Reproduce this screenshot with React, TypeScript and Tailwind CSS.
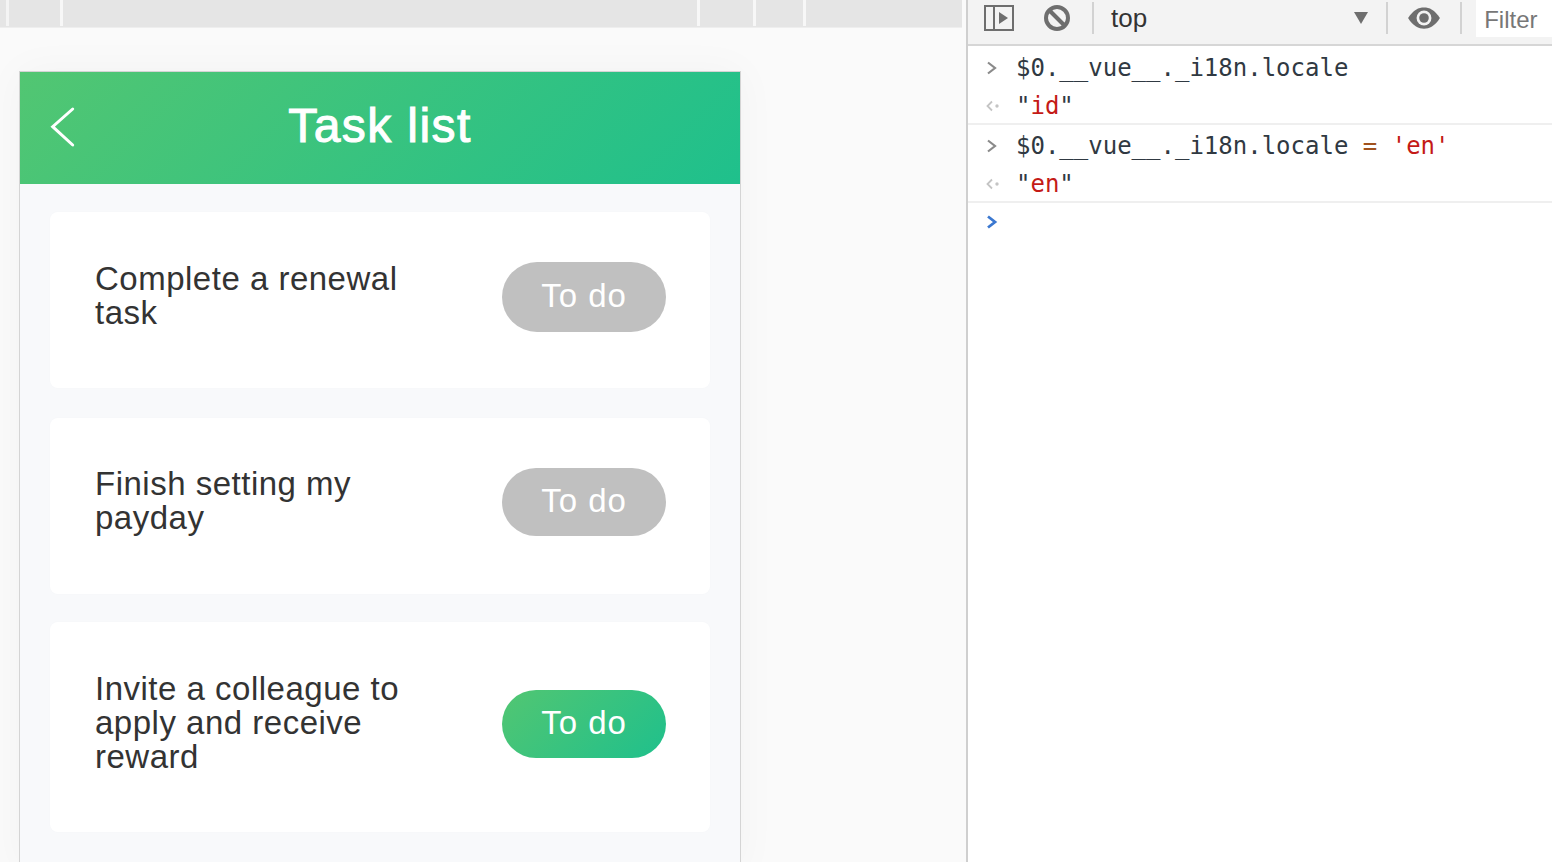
import React from 'react';

const tasks = [
  { id: 1, title: 'Complete a renewal task', h: 'h-[176px] pb-[6px] mb-[30px]', btn: 'h-[70px]', active: false },
  { id: 2, title: 'Finish setting my payday', h: 'h-[176px] pb-[8px] mb-[28px]', btn: 'h-[68px]', active: false },
  { id: 3, title: 'Invite a colleague to apply and receive reward', h: 'h-[210px] pb-[6px]', btn: 'h-[68px]', active: true },
];

const TaskCard = ({ title, h, btn, active }: { title: string; h: string; btn: string; active: boolean }) => (
  <div className={`${h} bg-white rounded-lg flex items-center justify-between pl-[45px] pr-[44px] shadow-[0_0_6px_rgba(0,0,0,0.012)]`}>
    <div className="w-[320px] text-[33px] tracking-[0.5px] leading-[34px] text-[#333] pb-[2px]">{title}</div>
    <div
      className={`w-[164px] ${btn} rounded-full flex items-center justify-center text-[33px] tracking-[1px] text-white pb-[2px] ${
        active ? 'bg-[linear-gradient(135deg,#52c672,#1fc08c)]' : 'bg-[#c0c0c0]'
      }`}
    >
      To do
    </div>
  </div>
);

const Prompt = ({ blue }: { blue?: boolean }) => (
  <svg width="12" height="14" viewBox="0 0 12 14" fill="none" stroke={blue ? '#3b78d0' : '#8a8a8a'} strokeWidth={blue ? 2.8 : 2.2}>
    <path d="M2 1.5 L9 7 L2 12.5" />
  </svg>
);

const ResultArrow = () => (
  <svg width="14" height="12" viewBox="0 0 14 12" fill="none" stroke="#c4c4c4" strokeWidth="1.8">
    <path d="M6 1.5 L1.5 6 L6 10.5" />
    <circle cx="11" cy="6" r="0.8" fill="#c4c4c4" />
  </svg>
);

const ConsoleRow = ({ kind, children, border }: { kind: 'in' | 'out'; children: React.ReactNode; border?: boolean }) => (
  <div className={`flex items-center pt-[2px] ${border ? 'border-b-2 border-[#efefef]' : ''}`}>
    <div className="w-[48px] pl-[18px] flex items-center">{kind === 'in' ? <Prompt /> : <ResultArrow />}</div>
    <div className="text-[24px] leading-none text-[#303942] whitespace-pre">{children}</div>
  </div>
);

const Sep = () => <div className="w-[2px] h-[32px] bg-[#d2d2d2]" />;

export default function App() {
  return (
    <div className="w-[1552px] h-[862px] overflow-hidden flex bg-white font-['Liberation_Sans',sans-serif]">
      {/* page side */}
      <div className="w-[962px] shrink-0 bg-[#fafafa] flex flex-col">
        <div className="h-[28px] shrink-0 bg-[#e5e5e5] border-b border-[#eeeeee] flex items-start">
          <div className="w-[9px] h-[26px] border-r-[3px] border-[#f4f4f4]" />
          <div className="w-[54px] h-[26px] border-r-[3px] border-[#f7f7f7]" />
          <div className="w-[637px] h-[26px] border-r-[3px] border-[#f7f7f7]" />
          <div className="w-[56px] h-[26px] border-r-[3px] border-[#f7f7f7]" />
          <div className="w-[50px] h-[26px] border-r-[3px] border-[#f7f7f7]" />
        </div>
        <div className="pl-[19px] pt-[43px]">
          <div className="w-[722px] h-[800px] bg-[#f8f9fb] border-x border-t border-[#d4d4d4] shadow-[0_0_40px_rgba(0,0,0,0.035)]">
            <div className="relative h-[112px] bg-[linear-gradient(135deg,#52c672,#1fc08c)] flex items-center justify-center">
              <svg className="absolute left-[30px] top-[34px]" width="28" height="42" viewBox="0 0 28 42" fill="none" stroke="white" strokeWidth="3" strokeLinecap="round">
                <path d="M22.7 3 L2.7 20.7 L22.7 39" />
              </svg>
              <span className="text-[48px] tracking-[1.4px] [-webkit-text-stroke:1px_white] text-white leading-none pb-[5px]">Task list</span>
            </div>
            <div className="px-[30px] pt-[28px] flex flex-col">
              {tasks.map((t) => (
                <TaskCard key={t.id} title={t.title} h={t.h} btn={t.btn} active={t.active} />
              ))}
            </div>
          </div>
        </div>
      </div>

      {/* devtools side */}
      <div className="w-[4px] shrink-0 bg-[#fafafa]" />
      <div className="flex-1 border-l-2 border-[#cfcfcf] bg-white flex flex-col">
        <div className="h-[46px] shrink-0 bg-[#f3f3f3] border-b-2 border-[#d6d6d6] flex items-center pb-[8px]">
          <svg className="ml-[16px]" width="31" height="26" viewBox="0 0 31 26" fill="none">
            <rect x="1" y="1" width="28" height="24" stroke="#6e6e6e" strokeWidth="2" />
            <path d="M10 1 V25" stroke="#6e6e6e" strokeWidth="2" />
            <path d="M15 7 L24 13 L15 19 Z" fill="#6e6e6e" />
          </svg>
          <svg className="ml-[28px]" width="28" height="28" viewBox="0 0 28 28" fill="none" stroke="#6e6e6e" strokeWidth="4">
            <circle cx="14" cy="14" r="11" />
            <path d="M6 6 L22 22" />
          </svg>
          <div className="ml-[21px]"><Sep /></div>
          <span className="ml-[17px] text-[26px] leading-none text-[#333]">top</span>
          <svg className="ml-[206px]" width="16" height="14" viewBox="0 0 16 14">
            <path d="M1 1 H15 L8 13 Z" fill="#6e6e6e" />
          </svg>
          <div className="ml-[17px]"><Sep /></div>
          <svg className="ml-[19px]" width="34" height="24" viewBox="0 0 32 22">
            <path d="M1 11 C6 3 11 1 16 1 C21 1 26 3 31 11 C26 19 21 21 16 21 C11 21 6 19 1 11 Z" fill="#6e6e6e" />
            <circle cx="16" cy="11" r="7" fill="#f3f3f3" />
            <circle cx="16" cy="11" r="4.5" fill="#6e6e6e" />
          </svg>
          <div className="ml-[19px]"><Sep /></div>
          <div className="ml-[14px] flex-1 h-[38px] bg-white flex items-center pl-[8px] pt-[3px] overflow-hidden">
            <span className="text-[24px] text-[#777]">Filter</span>
          </div>
        </div>
        <div className="mt-px font-['DejaVu_Sans_Mono',monospace] grid grid-cols-1 auto-rows-[39px]">
          <ConsoleRow kind="in">$0.__vue__._i18n.locale</ConsoleRow>
          <ConsoleRow kind="out" border>
            "<span className="text-[#c41a16]">id</span>"
          </ConsoleRow>
          <ConsoleRow kind="in">
            $0.__vue__._i18n.locale <span className="text-[#a0521d]">=</span> <span className="text-[#c41a16]">'en'</span>
          </ConsoleRow>
          <ConsoleRow kind="out" border>
            "<span className="text-[#c41a16]">en</span>"
          </ConsoleRow>
          <div className="flex items-center pl-[18px] pb-[2px]">
            <Prompt blue />
          </div>
        </div>
      </div>
    </div>
  );
}
